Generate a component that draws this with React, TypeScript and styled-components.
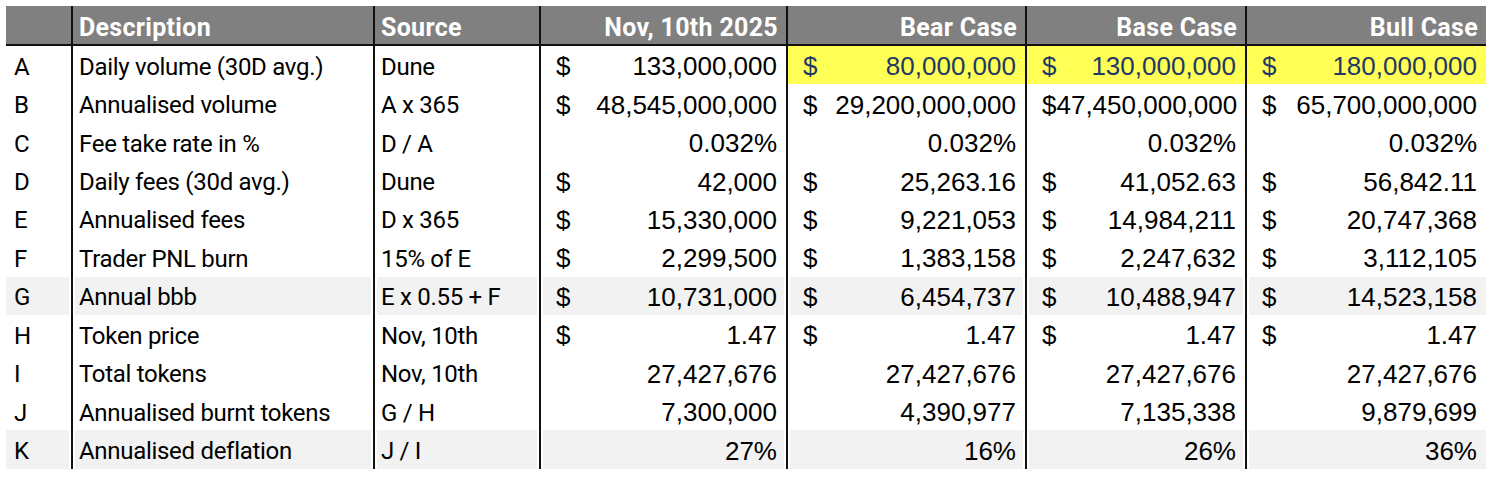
import React from "react";
import styled, { createGlobalStyle, css } from "styled-components";

const Global = createGlobalStyle`
  html, body { margin: 0; padding: 0; background: #ffffff; }
  body { font-family: "Roboto", "Liberation Sans", sans-serif; }
`;

const COLS = "65px 302px 166px 247px 239px 220px 241px";

const Sheet = styled.div`
  padding: 6px;
  width: 1480px;
`;

const Grid = styled.div`
  display: grid;
  grid-template-columns: ${COLS};
`;

const HeaderRow = styled.div`
  display: contents;
`;

const HeadCell = styled.div<{ $align?: "left" | "right"; $first?: boolean }>`
  box-sizing: border-box;
  height: 40px;
  background: #808080;
  color: #ffffff;
  font-family: "Roboto", "Liberation Sans", sans-serif;
  font-weight: 700;
  font-size: 25px;
  letter-spacing: 0.3px;
  display: flex;
  align-items: center;
  justify-content: ${(p) => (p.$align === "right" ? "flex-end" : "flex-start")};
  padding: 4px 8px 0 6px;
  border-bottom: 2px solid #111;
  border-left: ${(p) => (p.$first ? "none" : "2px solid #111")};
  white-space: nowrap;
  overflow: hidden;
`;

const Row = styled.div`
  display: contents;
`;

type CellProps = { $shade?: boolean; $first?: boolean; $last?: boolean; $hl?: boolean };

const cellBase = css<CellProps>`
  box-sizing: border-box;
  height: 38.45px;
  display: flex;
  align-items: center;
  white-space: nowrap;
  padding-top: 3px;
  border-left: ${(p) => (p.$first ? "none" : "2px solid #111")};
  background: ${(p) => (p.$hl ? "#ffff55" : p.$shade ? "#f2f2f2" : "#ffffff")};
  color: ${(p) => (p.$hl ? "#1f3864" : "#000000")};
  ${(p) =>
    p.$shade &&
    css`
      box-shadow: ${p.$first
        ? "inset -2px 0 0 #fff"
        : p.$last
        ? "inset 2px 0 0 #fff"
        : "inset 2px 0 0 #fff, inset -2px 0 0 #fff"};
    `}
`;

const TextCell = styled.div<CellProps>`
  ${cellBase};
  font-family: "Roboto", "Liberation Sans", sans-serif;
  font-size: 24px;
  letter-spacing: -0.3px;
  padding-left: ${(p) => (p.$first ? "8px" : "6px")};
`;

const NumCell = styled.div<CellProps>`
  ${cellBase};
  font-family: "Liberation Sans", Arial, sans-serif;
  font-size: 26px;
  justify-content: space-between;
  padding-left: 15px;
  padding-right: 9px;
`;

const Sign = styled.span``;
const Amount = styled.span`
  margin-left: auto;
`;

type Val = { cur?: boolean; text: string };
type RowData = {
  l: string;
  d: string;
  s: string;
  v: Val[];
  hl?: boolean;
  shade?: boolean;
};

const m = (text: string): Val => ({ cur: true, text });
const p = (text: string): Val => ({ text });

const rows: RowData[] = [
  { l: "A", d: "Daily volume (30D avg.)", s: "Dune", hl: true, v: [m("133,000,000"), m("80,000,000"), m("130,000,000"), m("180,000,000")] },
  { l: "B", d: "Annualised volume", s: "A x 365", v: [m("48,545,000,000"), m("29,200,000,000"), p("$47,450,000,000"), m("65,700,000,000")] },
  { l: "C", d: "Fee take rate in %", s: "D / A", v: [p("0.032%"), p("0.032%"), p("0.032%"), p("0.032%")] },
  { l: "D", d: "Daily fees (30d avg.)", s: "Dune", v: [m("42,000"), m("25,263.16"), m("41,052.63"), m("56,842.11")] },
  { l: "E", d: "Annualised fees", s: "D x 365", v: [m("15,330,000"), m("9,221,053"), m("14,984,211"), m("20,747,368")] },
  { l: "F", d: "Trader PNL burn", s: "15% of E", v: [m("2,299,500"), m("1,383,158"), m("2,247,632"), m("3,112,105")] },
  { l: "G", d: "Annual bbb", s: "E x 0.55 + F", shade: true, v: [m("10,731,000"), m("6,454,737"), m("10,488,947"), m("14,523,158")] },
  { l: "H", d: "Token price", s: "Nov, 10th", v: [m("1.47"), m("1.47"), m("1.47"), m("1.47")] },
  { l: "I", d: "Total tokens", s: "Nov, 10th", v: [p("27,427,676"), p("27,427,676"), p("27,427,676"), p("27,427,676")] },
  { l: "J", d: "Annualised burnt tokens", s: "G / H", v: [p("7,300,000"), p("4,390,977"), p("7,135,338"), p("9,879,699")] },
  { l: "K", d: "Annualised deflation", s: "J / I", shade: true, v: [p("27%"), p("16%"), p("26%"), p("36%")] },
];

const headers = ["Nov, 10th 2025", "Bear Case", "Base Case", "Bull Case"];

export default function App() {
  return (
    <>
      <Global />
      <Sheet>
        <Grid>
          <HeaderRow>
            <HeadCell $first />
            <HeadCell>Description</HeadCell>
            <HeadCell>Source</HeadCell>
            {headers.map((h) => (
              <HeadCell key={h} $align="right">
                {h}
              </HeadCell>
            ))}
          </HeaderRow>
          {rows.map((r) => (
            <Row key={r.l}>
              <TextCell $first $shade={r.shade}>{r.l}</TextCell>
              <TextCell $shade={r.shade}>{r.d}</TextCell>
              <TextCell $shade={r.shade}>{r.s}</TextCell>
              {r.v.map((v, i) => (
                <NumCell
                  key={i}
                  $shade={r.shade}
                  $last={i === 3}
                  $hl={r.hl && i > 0}
                >
                  {v.cur && <Sign>$</Sign>}
                  <Amount>{v.text}</Amount>
                </NumCell>
              ))}
            </Row>
          ))}
        </Grid>
      </Sheet>
    </>
  );
}
